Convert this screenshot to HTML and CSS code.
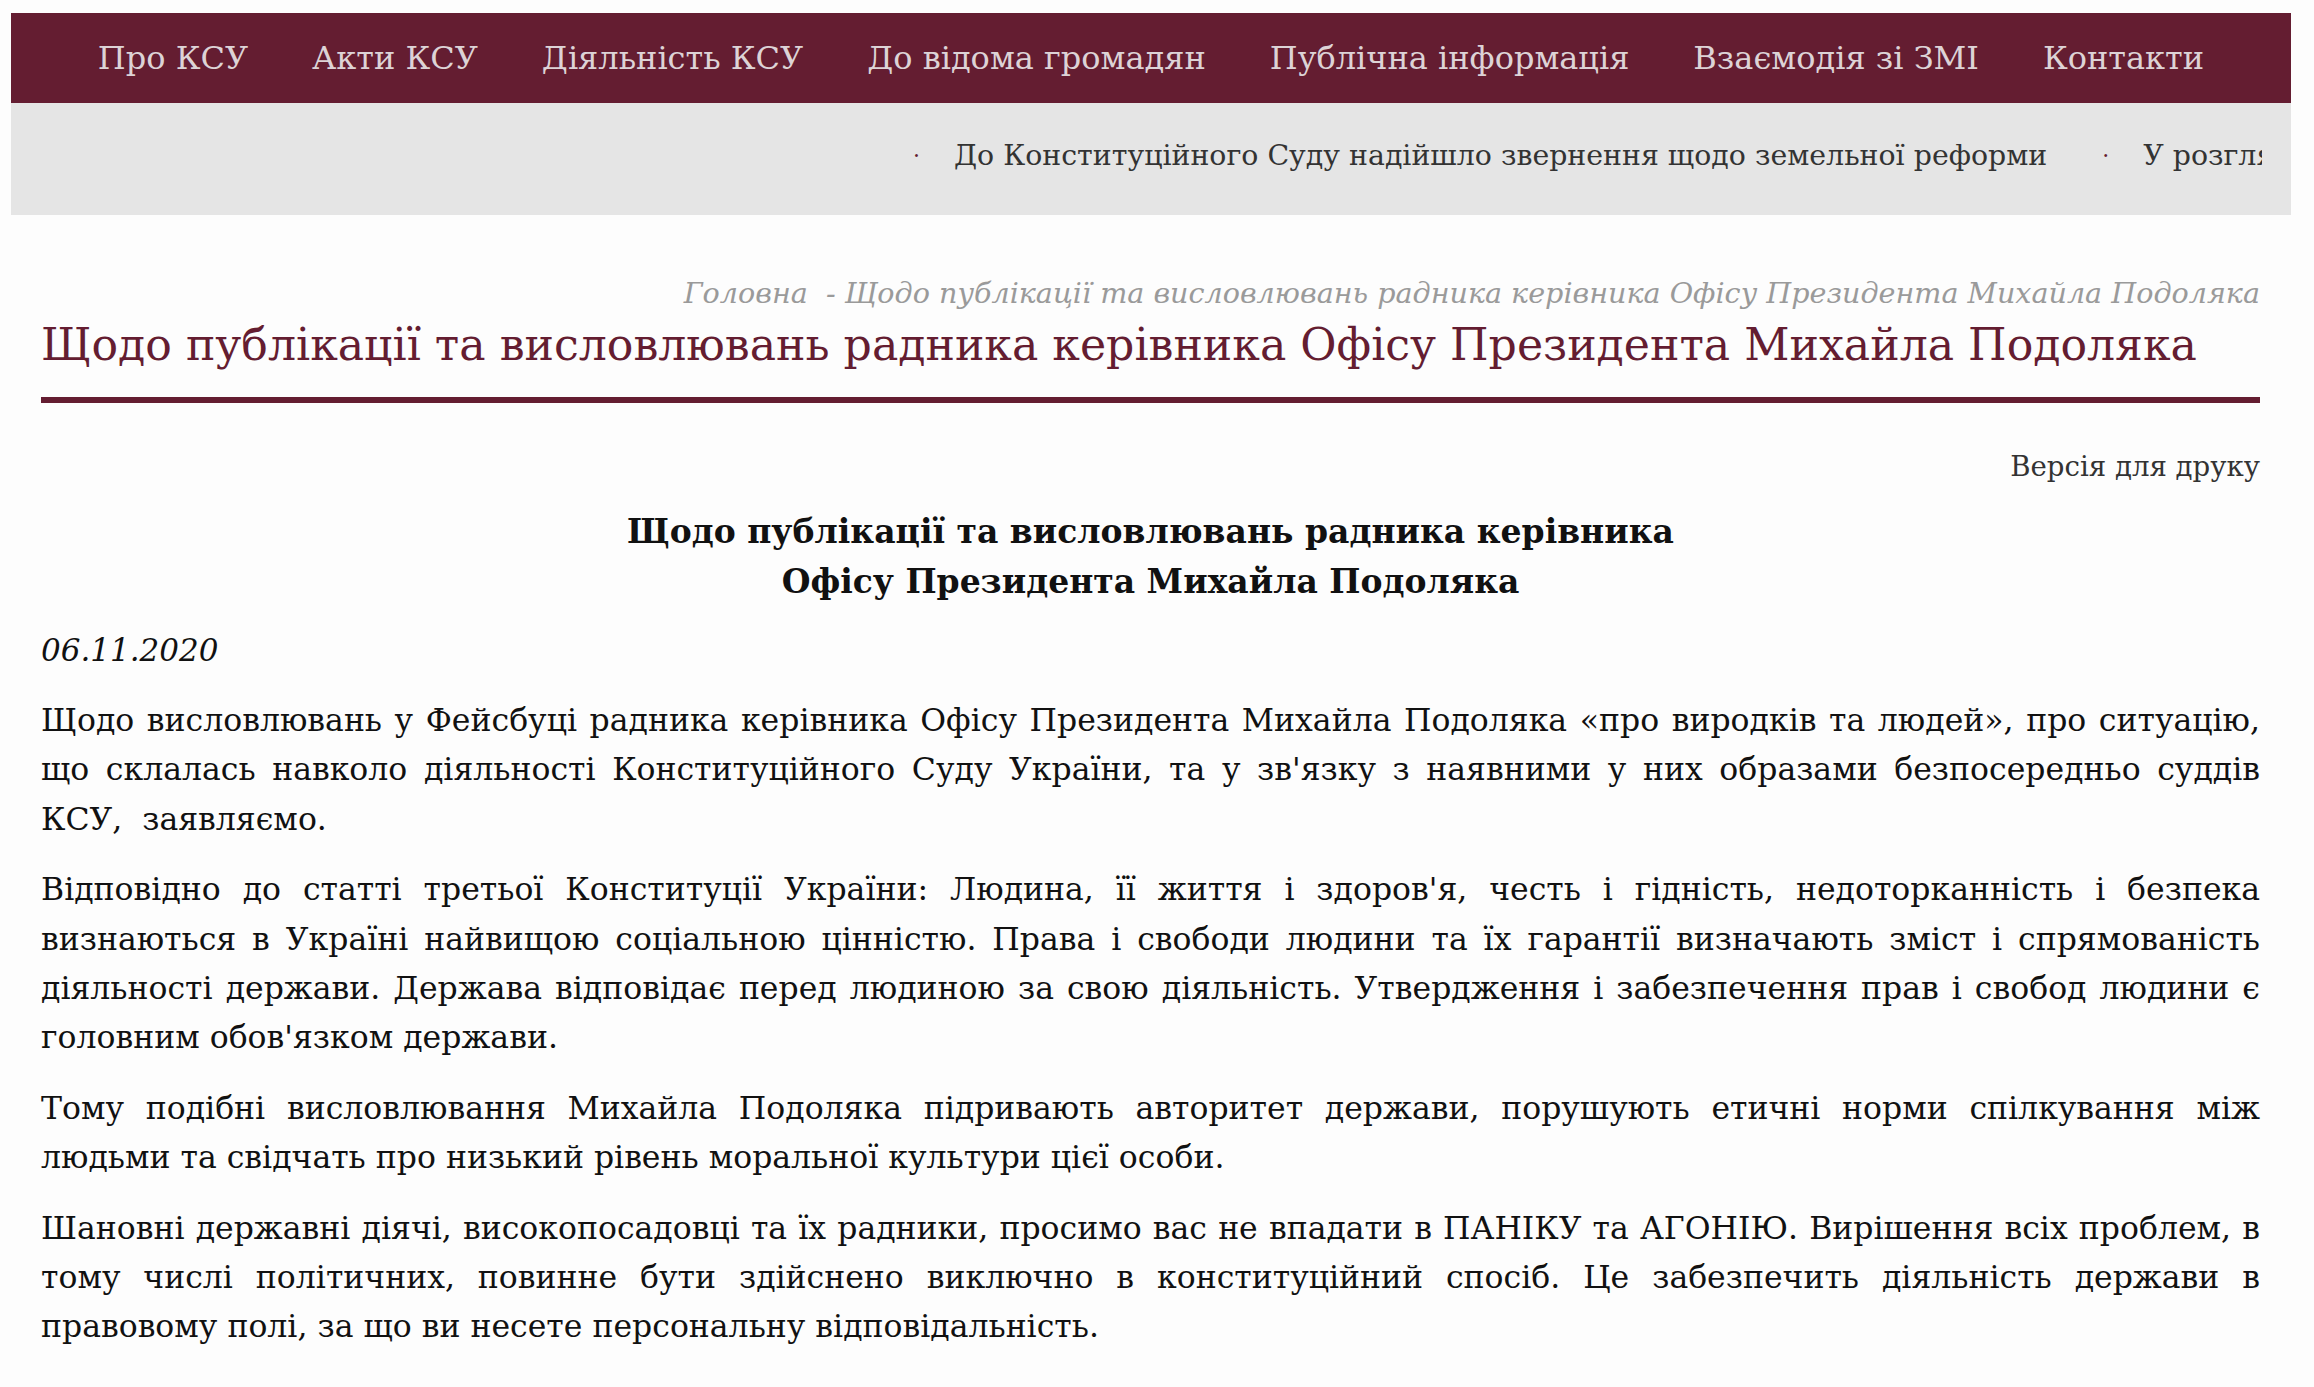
FILE: index.html
```html
<!DOCTYPE html>
<html lang="uk">
<head>
<meta charset="utf-8">
<title>Щодо публікації та висловлювань радника керівника Офісу Президента Михайла Подоляка</title>
<link rel="stylesheet" href="styles.css">
</head>
<body>
<div class="page">
  <nav class="nav">
    <a class="nav-item" href="#">Про КСУ</a>
    <a class="nav-item" href="#">Акти КСУ</a>
    <a class="nav-item" href="#">Діяльність КСУ</a>
    <a class="nav-item" href="#">До відома громадян</a>
    <a class="nav-item" href="#">Публічна інформація</a>
    <a class="nav-item" href="#">Взаємодія зі ЗМІ</a>
    <a class="nav-item" href="#">Контакти</a>
  </nav>
  <div class="ticker">
    <div class="ticker-window">
      <div class="ticker-track">
        <span class="ticker-dot">·</span>
        <span class="ticker-text">До Конституційного Суду надійшло звернення щодо земельної реформи</span>
        <span class="ticker-dot">·</span>
        <span class="ticker-text">У розгляді</span>
      </div>
    </div>
  </div>
  <main class="content">
    <div class="breadcrumb"><a href="#">Головна</a>&nbsp; - Щодо публікації та висловлювань радника керівника Офісу Президента Михайла Подоляка</div>
    <h1 class="page-title">Щодо публікації та висловлювань радника керівника Офісу Президента Михайла Подоляка</h1>
    <div class="print-link"><a href="#">Версія для друку</a></div>
    <h2 class="article-heading">Щодо публікації та висловлювань радника керівника<br>Офісу Президента Михайла Подоляка</h2>
    <p class="date">06.11.2020</p>
    <p class="para">Щодо висловлювань у Фейсбуці радника керівника Офісу Президента Михайла Подоляка «про виродків та людей», про ситуацію, що склалась навколо діяльності Конституційного Суду України, та у зв'язку з наявними у них образами безпосередньо суддів КСУ,&nbsp;&nbsp;заявляємо.</p>
    <p class="para">Відповідно до статті третьої Конституції України: Людина, її життя і здоров'я, честь і гідність, недоторканність і безпека визнаються в Україні найвищою соціальною цінністю. Права і свободи людини та їх гарантії визначають зміст і спрямованість діяльності держави. Держава відповідає перед людиною за свою діяльність. Утвердження і забезпечення прав і свобод людини є головним обов'язком держави.</p>
    <p class="para">Тому подібні висловлювання Михайла Подоляка підривають авторитет держави, порушують етичні норми спілкування між людьми&nbsp;та свідчать про низький рівень моральної культури цієї особи.</p>
    <p class="para">Шановні державні діячі, високопосадовці та їх радники, просимо вас не впадати в ПАНІКУ та АГОНІЮ. Вирішення всіх проблем, в тому числі політичних, повинне бути здійснено виключно в конституційний спосіб. Це забезпечить діяльність держави в правовому полі, за що ви несете персональну відповідальність.</p>
  </main>
</div>
</body>
</html>
```
FILE: styles.css
```css
html, body {
  margin: 0;
  padding: 0;
  background: #fdfdfd;
}
body {
  font-family: "DejaVu Serif", "Liberation Serif", serif;
  color: #111;
  overflow: hidden;
}
a {
  color: inherit;
  text-decoration: none;
}
.page {
  margin: 13px 23px 0 11px;
}
.nav {
  height: 90px;
  background: #641d31;
  display: flex;
  justify-content: center;
  align-items: center;
  gap: 64px;
}
.nav-item {
  color: #ddd3d6;
  font-size: 32px;
  white-space: nowrap;
}
.ticker {
  height: 112px;
  background: #e5e5e5;
  padding: 0 29px 0 30px;
  display: flex;
  align-items: center;
}
.ticker-window {
  flex: 1;
  overflow: hidden;
}
.ticker-track {
  display: flex;
  align-items: center;
  white-space: nowrap;
  padding-left: 872px;
  padding-bottom: 8px;
  font-size: 28.4px;
  color: #333;
}
.ticker-dot {
  color: #641d31;
  font-size: 22px;
  margin-right: 34px;
}
.ticker-text {
  margin-right: 55px;
}
.content {
  padding: 0 31px 0 30px;
}
.breadcrumb {
  text-align: right;
  font-style: italic;
  color: #9a9a9a;
  font-size: 28.6px;
  line-height: 40px;
  margin-top: 58px;
}
.page-title {
  margin: 1px 0 0;
  font-weight: normal;
  color: #641d31;
  font-size: 44.2px;
  line-height: 62px;
  padding-bottom: 21px;
  border-bottom: 6px solid #641d31;
}
.print-link {
  text-align: right;
  font-size: 27.6px;
  color: #333;
  line-height: 40px;
  margin-top: 44px;
}
.article-heading {
  margin: 20px 0 0;
  text-align: center;
  font-size: 33px;
  font-weight: bold;
  line-height: 50px;
}
.date {
  margin: 18px 0 0;
  font-style: italic;
  font-size: 31px;
  line-height: 50px;
}
.para {
  margin: 21px 0 0;
  font-size: 31.5px;
  line-height: 49.4px;
  text-align: justify;
}
```
